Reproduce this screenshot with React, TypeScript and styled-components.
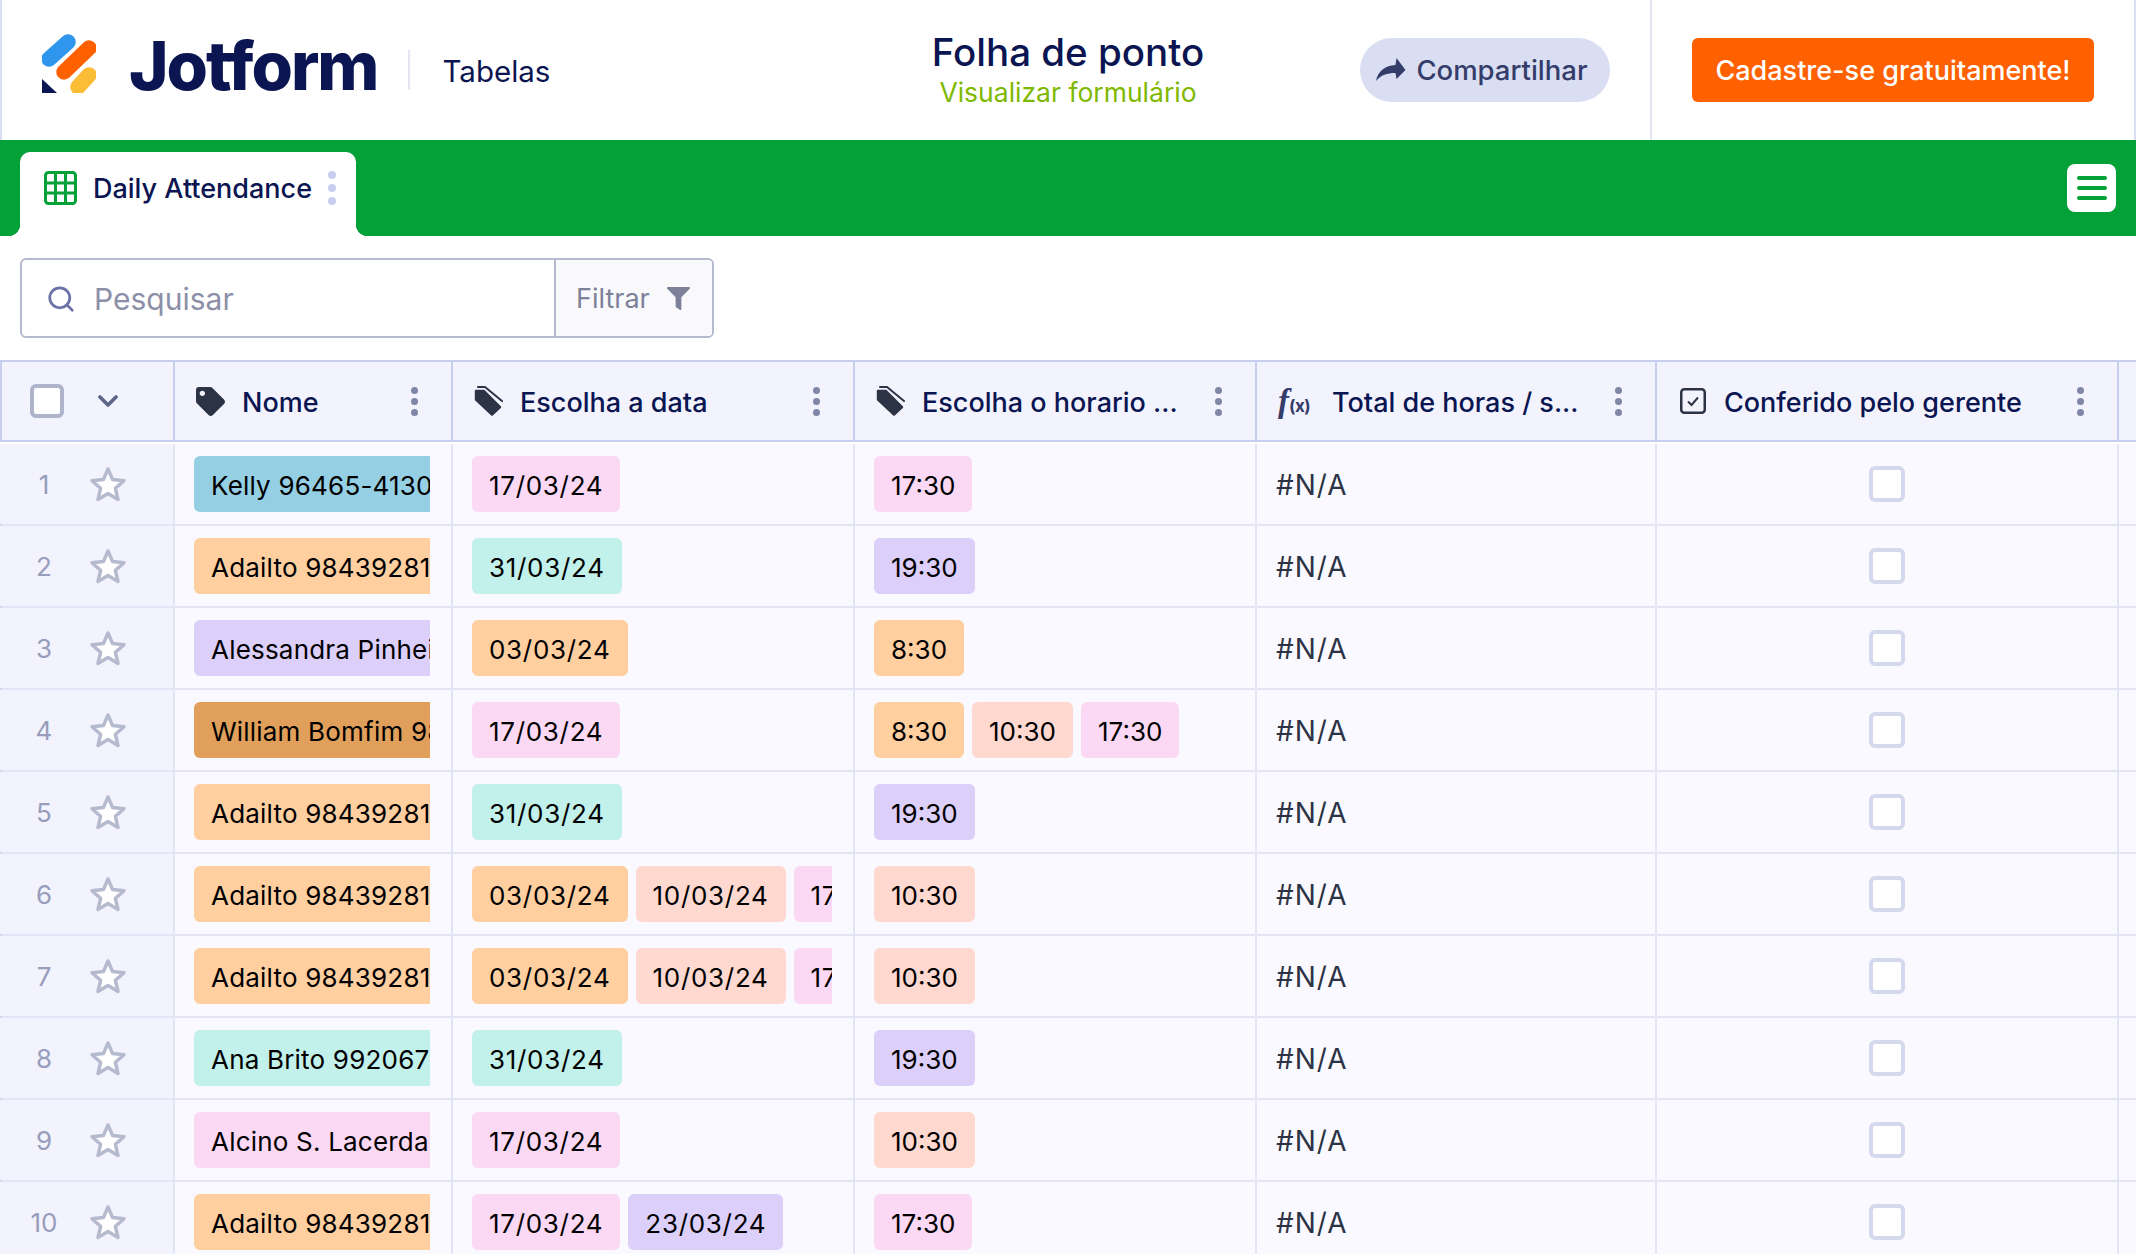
import React from 'react';
import styled, { createGlobalStyle } from 'styled-components';
import { Search } from 'lucide-react';
import { FaFilter, FaTag } from 'react-icons/fa';

const GlobalStyle = createGlobalStyle`
  html, body {
    margin: 0;
    padding: 0;
    height: 1254px;
    overflow: hidden;
    background: #fff;
    font-family: Inter, "Liberation Sans", sans-serif;
    color: #0a1551;
  }
  * { box-sizing: border-box; }
`;

const Page = styled.div`
  width: 2136px;
  height: 1254px;
  overflow: hidden;
`;

const TopBar = styled.header`
  height: 140px;
  display: grid;
  grid-template-columns: 1650px 1fr;
  border-inline: 2px solid #dadef3;
`;

const TopMain = styled.div`
  display: grid;
  grid-template-columns: 876px 300px 1fr;
  align-items: center;
  padding-left: 40px;
  padding-right: 40px;
  border-right: 2px solid #e3e5f5;
`;

const Brand = styled.div`
  display: flex;
  align-items: center;

  svg {
    margin-top: -14px;
  }
`;

const Wordmark = styled.span`
  margin-left: 33px;
  margin-top: -10px;
  font-size: 67px;
  font-weight: 800;
  letter-spacing: -2px;
  line-height: 1;
  color: #0a1551;
`;

const BrandDivider = styled.span`
  width: 2px;
  height: 40px;
  margin-left: 31px;
  background: #e3e5f5;
`;

const Product = styled.span`
  margin-left: 32px;
  padding-top: 2px;
  font-size: 29.5px;
  color: #0a1551;
`;

const TitleBlock = styled.div`
  display: flex;
  flex-direction: column;
  align-items: center;
  white-space: nowrap;
`;

const Title = styled.div`
  font-size: 38.5px;
  font-weight: 500;
  line-height: 45px;
  color: #0a1551;
`;

const SubTitle = styled.div`
  font-size: 26.5px;
  line-height: 35px;
  color: #7fb800;
`;

const ShareButton = styled.div`
  justify-self: end;
  width: 250px;
  height: 64px;
  padding-right: 6px;
  border-radius: 32px;
  background: #dadef3;
  color: #343c6a;
  display: flex;
  align-items: center;
  justify-content: center;
  gap: 10px;
  font-size: 27.5px;
  font-weight: 500;
`;

const TopAside = styled.div`
  display: flex;
  align-items: center;
  padding-left: 40px;
`;

const SignUp = styled.div`
  width: 402px;
  height: 64px;
  border-radius: 6px;
  background: #ff6100;
  color: #fff;
  display: flex;
  align-items: center;
  justify-content: center;
  font-size: 27px;
  font-weight: 500;
`;

const TabBar = styled.div`
  height: 96px;
  background: #04a038;
  display: flex;
  align-items: flex-end;
  justify-content: space-between;
  padding: 0 20px;
`;

const Tab = styled.div`
  position: relative;
  width: 336px;
  height: 84px;
  background: #fff;
  border-radius: 10px 10px 0 0;
  display: flex;
  align-items: flex-start;
  padding: 19px 0 0 24px;
  gap: 16px;

  &::before,
  &::after {
    content: '';
    position: absolute;
    bottom: 0;
    width: 12px;
    height: 12px;
  }
  &::before {
    left: -12px;
    background: radial-gradient(circle at 0 0, transparent 12px, #fff 12.5px);
  }
  &::after {
    right: -12px;
    background: radial-gradient(circle at 100% 0, transparent 12px, #fff 12.5px);
  }
`;

const TabLabel = styled.span`
  font-size: 27px;
  font-weight: 500;
  line-height: 36px;
  white-space: nowrap;
`;

const Dots = styled.span<{ $color: string; $size: number; $gap: number }>`
  display: inline-flex;
  flex-direction: column;
  gap: ${({ $gap }) => $gap}px;
  flex-shrink: 0;

  i {
    display: block;
    width: ${({ $size }) => $size}px;
    height: ${({ $size }) => $size}px;
    border-radius: 50%;
    background: ${({ $color }) => $color};
  }
`;

const MenuButton = styled.div`
  width: 49px;
  height: 48px;
  align-self: center;
  background: #fff;
  border-radius: 8px;
  display: flex;
  flex-direction: column;
  justify-content: center;
  align-items: center;
  gap: 6px;

  i {
    display: block;
    width: 30px;
    height: 4px;
    border-radius: 2px;
    background: #04a038;
  }
`;

const Toolbar = styled.div`
  height: 124px;
  padding: 22px 20px 0;
`;

const SearchBox = styled.div`
  width: 694px;
  height: 80px;
  border: 2px solid #b5bacf;
  border-radius: 6px;
  display: flex;
  overflow: hidden;
`;

const SearchField = styled.div`
  flex: 1;
  display: flex;
  align-items: center;
  gap: 18px;
  padding-left: 24px;
  padding-top: 1px;
  font-size: 30px;
  color: #8d8fa8;
  svg { color: #6c73a8; }
`;

const FilterButton = styled.div`
  width: 158px;
  background: #f9f9fc;
  border-left: 2px solid #b5bacf;
  display: flex;
  align-items: center;
  gap: 17px;
  padding-left: 20px;
  font-size: 27px;
  color: #7c8199;
`;

const COLUMNS = '171px 278px 402px 402px 400px 462px 19px';

const HeaderRow = styled.div`
  display: grid;
  grid-template-columns: ${COLUMNS};
  height: 82px;
  background: #f3f3fe;
  border: solid #c8ceed;
  border-width: 2px 0 2px 2px;
  margin-bottom: 2px;
`;

const HeaderLead = styled.div`
  display: flex;
  align-items: center;
  margin-left: -2px;
  padding-left: 30px;
  gap: 34px;
`;

const HeadBox = styled.span`
  width: 34px;
  height: 34px;
  border: 4px solid #afb4ca;
  border-radius: 6px;
  background: #fff;
`;

const HeaderCell = styled.div<{ $gap?: number }>`
  border-left: 2px solid #c8ceed;
  display: flex;
  align-items: center;
  padding-left: 21px;
  padding-right: 33px;
  gap: ${({ $gap }) => $gap ?? 17}px;
  font-size: 27px;
  font-weight: 500;
  white-space: nowrap;
  svg { color: #2c3345; flex-shrink: 0; }
`;

const HeaderText = styled.span`
  flex: 1;
  min-width: 0;
  padding-top: 2px;
`;

const FxIcon = styled.span`
  font-family: "Liberation Serif", serif;
  font-style: italic;
  font-size: 33px;
  font-weight: 700;
  line-height: 1;
  color: #343c6a;
  width: 34px;
  white-space: nowrap;
  small {
    font-family: Inter, sans-serif;
    font-style: normal;
    font-size: 17px;
    font-weight: 700;
    letter-spacing: -0.5px;
  }
`;

const Row = styled.div`
  display: grid;
  grid-template-columns: ${COLUMNS};
  height: 82px;
  background: #f9f9ff;
  border-left: 2px solid #c8ceed;
  border-bottom: 2px solid #e3e5f5;
`;

const RowLead = styled.div`
  margin-left: -2px;
  background: #f3f3fe;
  display: grid;
  grid-template-columns: 88px 40px;
  align-items: center;
  justify-items: center;
`;

const RowNumber = styled.span`
  font-size: 26px;
  color: #979dba;
`;

const Cell = styled.div`
  border-left: 2px solid #e3e5f5;
  padding: 0 21px 0 19px;
  display: flex;
  align-items: center;
  min-width: 0;
`;

const CenterCell = styled(Cell)`
  justify-content: center;
  padding: 0;
`;

const Pills = styled.div`
  display: flex;
  gap: 8px;
  width: 100%;
  overflow: hidden;
`;

const Pill = styled.span<{ $bg: string }>`
  flex-shrink: 0;
  height: 56px;
  padding: 2px 17px 0;
  border-radius: 6px;
  display: flex;
  align-items: center;
  font-size: 26px;
  color: #000;
  white-space: nowrap;
  background: ${({ $bg }) => $bg};
`;

const NamePill = styled(Pill)`
  letter-spacing: 0.2px;
`;

const DatePill = styled(Pill)`
  letter-spacing: 0.7px;
`;

const Formula = styled.span`
  padding-top: 2px;
  font-size: 28px;
  letter-spacing: 1px;
  color: #2c3345;
`;

const RowBox = styled.span`
  width: 36px;
  height: 36px;
  border: 4px solid #d5d9ee;
  border-radius: 6px;
  background: #fff;
`;

const pink = '#fbd8f3';
const orange = '#ffcfa0';
const teal = '#c2f0ea';
const purple = '#dccff9';
const peach = '#ffd8cf';
const blue = '#95cfe3';
const brown = '#e09f5a';

type Tag = [string, string];

const a: Tag = ['Adailto 98439281', orange];
const d17: Tag = ['17/03/24', pink];
const d31: Tag = ['31/03/24', teal];
const d03: Tag = ['03/03/24', orange];
const d10: Tag = ['10/03/24', peach];
const d23: Tag = ['23/03/24', purple];
const t830: Tag = ['8:30', orange];
const t1030: Tag = ['10:30', peach];
const t1730: Tag = ['17:30', pink];
const t1930: Tag = ['19:30', purple];

const rows: { name: Tag; dates: Tag[]; times: Tag[] }[] = [
  { name: ['Kelly 96465-4130', blue], dates: [d17], times: [t1730] },
  { name: a, dates: [d31], times: [t1930] },
  { name: ['Alessandra Pinheiro', purple], dates: [d03], times: [t830] },
  { name: ['William Bomfim 98', brown], dates: [d17], times: [t830, t1030, t1730] },
  { name: a, dates: [d31], times: [t1930] },
  { name: a, dates: [d03, d10, d17], times: [t1030] },
  { name: a, dates: [d03, d10, d17], times: [t1030] },
  { name: ['Ana Brito 99206755', teal], dates: [d31], times: [t1930] },
  { name: ['Alcino S. Lacerda', pink], dates: [d17], times: [t1030] },
  { name: a, dates: [d17, d23], times: [t1730] },
];

const Logo = () => (
  <svg width="54" height="60" viewBox="0 0 54 60" fill="none">
    <path d="M7 26 L26 9" stroke="#2f96ee" strokeWidth="15.5" strokeLinecap="round" />
    <path d="M22 39 L47 15" stroke="#ff6100" strokeWidth="15.5" strokeLinecap="round" />
    <path d="M36 54 L47 42" stroke="#fbbd35" strokeWidth="15.5" strokeLinecap="round" />
    <path d="M0 46 L15 60 H0 Z" fill="#0a1551" />
  </svg>
);

const GridIcon = () => (
  <svg width="33" height="34" viewBox="0 0 33 34" fill="none" stroke="#04a038" strokeWidth="3">
    <rect x="1.5" y="1.5" width="30" height="31" rx="3" />
    <path d="M1.5 12H31.5M1.5 22H31.5M11.5 1.5V32.5M21.5 1.5V32.5" />
  </svg>
);

const ShareIcon = () => (
  <svg width="30" height="24" viewBox="0 0 30 24" fill="#343c6a">
    <path d="M0 23 C2 13 9 7.5 19.5 7 L20.5 0 L29.5 12 L20.5 21 L19.5 15 C11 15 5 17 0 23 Z" />
  </svg>
);

const ChevronIcon = () => (
  <svg width="20" height="12" viewBox="0 0 20 12" fill="none" stroke="#5e6586" strokeWidth="3.6" strokeLinecap="round" strokeLinejoin="round">
    <path d="M2 2 L10 10 L18 2" />
  </svg>
);

const TagsIcon = () => (
  <svg width="29" height="30" viewBox="0 0 29 30">
    <path
      d="M2 5 H10 L26 21 L18 28.5 L2 13.5 Z"
      fill="#2c3345"
      stroke="#2c3345"
      strokeWidth="2.4"
      strokeLinejoin="round"
    />
    <path d="M4 1 H11 L28 15" fill="none" stroke="#2c3345" strokeWidth="2" strokeLinecap="round" strokeLinejoin="round" />
  </svg>
);

const StarIcon = () => (
  <svg width="38" height="36" viewBox="0 0 38 36" fill="#fff" stroke="#b5bacf" strokeWidth="3.5" strokeLinejoin="round">
    <path d="M19 3 L23.6 13.6 L35 14.7 L26.4 22.3 L29 33.4 L19 27.6 L9 33.4 L11.6 22.3 L3 14.7 L14.4 13.6 Z" />
  </svg>
);

const CheckIcon = () => (
  <svg width="28" height="26" viewBox="-2 0 28 26" fill="none" stroke="#2c3345">
    <rect x="1.25" y="1.25" width="23.5" height="23.5" rx="3" strokeWidth="2.5" />
    <path d="M8 13.5 L11.5 17 L18 9.5" strokeWidth="2" />
  </svg>
);

const HeadDots = () => (
  <Dots $color="#7f86a6" $size={7} $gap={4}>
    <i />
    <i />
    <i />
  </Dots>
);

export default function App() {
  return (
    <Page>
      <GlobalStyle />
      <TopBar>
        <TopMain>
          <Brand>
            <Logo />
            <Wordmark>Jotform</Wordmark>
            <BrandDivider />
            <Product>Tabelas</Product>
          </Brand>
          <TitleBlock>
            <Title>Folha de ponto</Title>
            <SubTitle>Visualizar formulário</SubTitle>
          </TitleBlock>
          <ShareButton>
            <ShareIcon />
            Compartilhar
          </ShareButton>
        </TopMain>
        <TopAside>
          <SignUp>Cadastre-se gratuitamente!</SignUp>
        </TopAside>
      </TopBar>

      <TabBar>
        <Tab>
          <GridIcon />
          <TabLabel>Daily Attendance</TabLabel>
          <Dots $color="#c8ceed" $size={8} $gap={5}>
            <i />
            <i />
            <i />
          </Dots>
        </Tab>
        <MenuButton>
          <i />
          <i />
          <i />
        </MenuButton>
      </TabBar>

      <Toolbar>
        <SearchBox>
          <SearchField>
            <Search size={30} strokeWidth={2.2} />
            Pesquisar
          </SearchField>
          <FilterButton>
            Filtrar
            <FaFilter size={23} />
          </FilterButton>
        </SearchBox>
      </Toolbar>

      <HeaderRow>
        <HeaderLead>
          <HeadBox />
          <ChevronIcon />
        </HeaderLead>
        <HeaderCell>
          <FaTag size={29} />
          <HeaderText>Nome</HeaderText>
          <HeadDots />
        </HeaderCell>
        <HeaderCell>
          <TagsIcon />
          <HeaderText>Escolha a data</HeaderText>
          <HeadDots />
        </HeaderCell>
        <HeaderCell>
          <TagsIcon />
          <HeaderText>Escolha o horario ...</HeaderText>
          <HeadDots />
        </HeaderCell>
        <HeaderCell $gap={20}>
          <FxIcon>
            f<small>(x)</small>
          </FxIcon>
          <HeaderText>Total de horas / s...</HeaderText>
          <HeadDots />
        </HeaderCell>
        <HeaderCell $gap={18}>
          <CheckIcon />
          <HeaderText>Conferido pelo gerente</HeaderText>
          <HeadDots />
        </HeaderCell>
        <HeaderCell />
      </HeaderRow>

      {rows.map((row, i) => (
        <Row key={i}>
          <RowLead>
            <RowNumber>{i + 1}</RowNumber>
            <StarIcon />
          </RowLead>
          <Cell>
            <Pills>
              <NamePill $bg={row.name[1]}>{row.name[0]}</NamePill>
            </Pills>
          </Cell>
          <Cell>
            <Pills>
              {row.dates.map(([label, bg], j) => (
                <DatePill key={j} $bg={bg}>
                  {label}
                </DatePill>
              ))}
            </Pills>
          </Cell>
          <Cell>
            <Pills>
              {row.times.map(([label, bg], j) => (
                <Pill key={j} $bg={bg}>
                  {label}
                </Pill>
              ))}
            </Pills>
          </Cell>
          <Cell>
            <Formula>#N/A</Formula>
          </Cell>
          <CenterCell>
            <RowBox />
          </CenterCell>
          <Cell />
        </Row>
      ))}
    </Page>
  );
}
